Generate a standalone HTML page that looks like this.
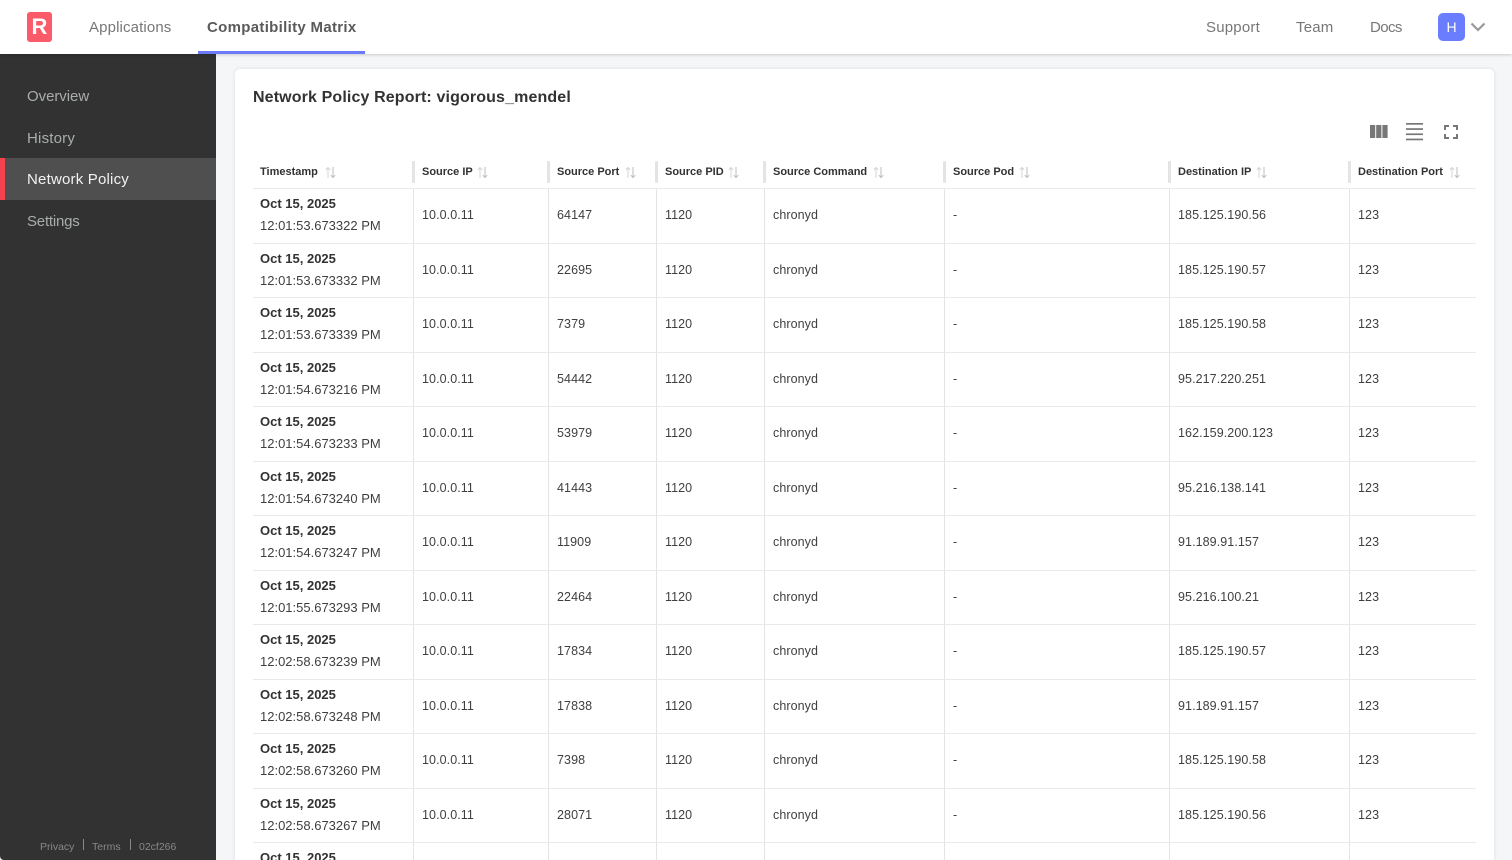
<!DOCTYPE html>
<html><head><meta charset="utf-8"><title>Network Policy Report</title>
<style>
*{box-sizing:border-box}
html,body{margin:0;padding:0;width:1512px;height:860px;overflow:hidden;background:#f5f6f8;font-family:"Liberation Sans",sans-serif}
#wrap{position:absolute;left:0;top:0;width:1512px;height:860px;overflow:hidden;background:#f5f6f8}
#top{position:absolute;left:0;top:0;width:1512px;height:54px;background:#fff;box-shadow:0 1px 3px rgba(0,0,0,.18);z-index:3}
#top span{position:absolute;top:18px;font-size:15px;line-height:20px;color:#777;letter-spacing:.2px;white-space:nowrap}
#logo{position:absolute;left:27px;top:12px;width:25px;height:30px;background:#fb5a68;border-radius:3px;color:#fff;font-weight:bold;font-size:22px;line-height:30px;text-align:center}
#ul{position:absolute;left:198px;top:51px;width:167px;height:3px;background:#6a7cfb}
#av{position:absolute;left:1438px;top:13px;width:27px;height:28px;border-radius:5px;background:#6a7dff;color:#fff;font-size:14px;line-height:28px;text-align:center}
#side{position:absolute;left:0;top:54px;width:216px;height:806px;background:#323232;border-bottom-left-radius:4px;z-index:2}
#side .i{position:absolute;left:27px;font-size:15px;line-height:20px;color:#a9adad;white-space:nowrap}
#act{position:absolute;left:0;top:104px;width:216px;height:42px;background:#4f4f4f;border-left:5px solid #f5424f}
#foot span{position:absolute;top:786px;font-size:10.5px;line-height:14px;color:#888}
#foot i{position:absolute;top:785px;width:1px;height:11px;background:#888}
#card{position:absolute;left:235px;top:69px;width:1259px;height:830px;background:#fff;border-radius:5px;box-shadow:0 0 4px rgba(0,0,0,.1)}
#title{position:absolute;left:253px;top:87px;font-size:16px;line-height:22px;font-weight:bold;color:#323232;white-space:nowrap;letter-spacing:.13px}
.h{position:absolute;top:166px;font-size:11px;line-height:13px;font-weight:bold;color:#323232;white-space:nowrap}
.hd{position:absolute;top:161px;width:3px;height:22px;background:#e4e4e4;border-radius:1px}
.s{position:absolute;top:166px;width:11px;height:13px}
#hb{position:absolute;left:253px;top:188px;width:1223px;height:1px;background:#e9e9e9}
#t{position:absolute;left:253px;top:189px;width:1223px;height:671px;overflow:hidden}
.r{display:grid;grid-template-columns:160px 135px 108px 108px 180px 225px 180px 127px;height:54.5px;border-bottom:1px solid #e9e9e9;font-size:12.5px;color:#3f3f3f;letter-spacing:.08px}
.r div{padding-left:8px;line-height:53.5px;border-left:1.5px solid #e4e4e4;white-space:nowrap}
.r div:first-child{border-left:0;padding-left:7px;font-size:13px;line-height:22px;padding-top:4.4px;letter-spacing:0}
.r b{display:block;color:#323232}
</style></head><body>
<div id="wrap">
<svg width="0" height="0" style="position:absolute"><defs><g id="so" fill="none" stroke-width="1"><path d="M3 12V1.500M.8 3.800 3 1.500 5.200 3.800" stroke="#d4d4d4"/><path d="M8 1v10.500M5.800 9.200 8 11.500 10.200 9.200" stroke="#bdbdbd"/></g></defs></svg>
<div id="top">
<div id="logo">R</div>
<span style="left:89px;letter-spacing:.13px">Applications</span>
<span style="left:207px;font-weight:bold;color:#5a5a5a;letter-spacing:.31px">Compatibility Matrix</span>
<div id="ul"></div>
<span style="left:1206px">Support</span><span style="left:1296px">Team</span><span style="left:1370px;letter-spacing:-.6px">Docs</span>
<div id="av">H</div>
<svg style="position:absolute;left:1470px;top:22px" width="16" height="10"><path d="M1.500 1.500 8 8l6.500-6.500" fill="none" stroke="#999" stroke-width="2.200"/></svg>
</div>
<div id="side">
<div id="act"></div>
<div class="i" style="top:33px;letter-spacing:-.05px">Overview</div>
<div class="i" style="top:75px;letter-spacing:.2px">History</div>
<div class="i" style="top:116px;color:#f2f2f2;letter-spacing:.2px">Network Policy</div>
<div class="i" style="top:158px;letter-spacing:-.2px">Settings</div>
<div id="foot"><span style="left:40px">Privacy</span><i style="left:83px"></i><span style="left:92px">Terms</span><i style="left:130px"></i><span style="left:139px">02cf266</span></div>
</div>
<div id="card"></div>
<div id="title">Network Policy Report: vigorous_mendel</div>
<svg style="position:absolute;left:1370px;top:125px" width="18" height="14" fill="#777"><rect width="5.200" height="13"/><rect x="6.200" width="5.200" height="13"/><rect x="12.400" width="5.200" height="13"/></svg>
<svg style="position:absolute;left:1406px;top:122px" width="18" height="20" fill="#777"><rect y="1" width="17" height="1.700"/><rect y="6.200" width="17" height="1.700"/><rect y="11.400" width="17" height="1.700"/><rect y="16.600" width="17" height="1.700"/></svg>
<svg style="position:absolute;left:1444px;top:125px" width="14" height="14" fill="none" stroke="#777" stroke-width="2"><path d="M1 5V1h4M9 1h4v4M13 9v4H9M5 13H1V9"/></svg>

<div class="h" style="left:260px">Timestamp</div><svg class="s" style="left:325px"><use href="#so"/></svg><div class="hd" style="left:412px"></div>
<div class="h" style="left:422px">Source IP</div><svg class="s" style="left:477px"><use href="#so"/></svg><div class="hd" style="left:547px"></div>
<div class="h" style="left:557px">Source Port</div><svg class="s" style="left:625px"><use href="#so"/></svg><div class="hd" style="left:655px"></div>
<div class="h" style="left:665px">Source PID</div><svg class="s" style="left:728px"><use href="#so"/></svg><div class="hd" style="left:763px"></div>
<div class="h" style="left:773px">Source Command</div><svg class="s" style="left:873px"><use href="#so"/></svg><div class="hd" style="left:943px"></div>
<div class="h" style="left:953px">Source Pod</div><svg class="s" style="left:1019px"><use href="#so"/></svg><div class="hd" style="left:1168px"></div>
<div class="h" style="left:1178px">Destination IP</div><svg class="s" style="left:1256px"><use href="#so"/></svg><div class="hd" style="left:1348px"></div>
<div class="h" style="left:1358px">Destination Port</div><svg class="s" style="left:1449px"><use href="#so"/></svg>
<div id="hb"></div>
<div id="t">
<div class="r"><div><b>Oct 15, 2025</b>12:01:53.673322 PM</div><div>10.0.0.11</div><div>64147</div><div>1120</div><div>chronyd</div><div>-</div><div>185.125.190.56</div><div>123</div></div>
<div class="r"><div><b>Oct 15, 2025</b>12:01:53.673332 PM</div><div>10.0.0.11</div><div>22695</div><div>1120</div><div>chronyd</div><div>-</div><div>185.125.190.57</div><div>123</div></div>
<div class="r"><div><b>Oct 15, 2025</b>12:01:53.673339 PM</div><div>10.0.0.11</div><div>7379</div><div>1120</div><div>chronyd</div><div>-</div><div>185.125.190.58</div><div>123</div></div>
<div class="r"><div><b>Oct 15, 2025</b>12:01:54.673216 PM</div><div>10.0.0.11</div><div>54442</div><div>1120</div><div>chronyd</div><div>-</div><div>95.217.220.251</div><div>123</div></div>
<div class="r"><div><b>Oct 15, 2025</b>12:01:54.673233 PM</div><div>10.0.0.11</div><div>53979</div><div>1120</div><div>chronyd</div><div>-</div><div>162.159.200.123</div><div>123</div></div>
<div class="r"><div><b>Oct 15, 2025</b>12:01:54.673240 PM</div><div>10.0.0.11</div><div>41443</div><div>1120</div><div>chronyd</div><div>-</div><div>95.216.138.141</div><div>123</div></div>
<div class="r"><div><b>Oct 15, 2025</b>12:01:54.673247 PM</div><div>10.0.0.11</div><div>11909</div><div>1120</div><div>chronyd</div><div>-</div><div>91.189.91.157</div><div>123</div></div>
<div class="r"><div><b>Oct 15, 2025</b>12:01:55.673293 PM</div><div>10.0.0.11</div><div>22464</div><div>1120</div><div>chronyd</div><div>-</div><div>95.216.100.21</div><div>123</div></div>
<div class="r"><div><b>Oct 15, 2025</b>12:02:58.673239 PM</div><div>10.0.0.11</div><div>17834</div><div>1120</div><div>chronyd</div><div>-</div><div>185.125.190.57</div><div>123</div></div>
<div class="r"><div><b>Oct 15, 2025</b>12:02:58.673248 PM</div><div>10.0.0.11</div><div>17838</div><div>1120</div><div>chronyd</div><div>-</div><div>91.189.91.157</div><div>123</div></div>
<div class="r"><div><b>Oct 15, 2025</b>12:02:58.673260 PM</div><div>10.0.0.11</div><div>7398</div><div>1120</div><div>chronyd</div><div>-</div><div>185.125.190.58</div><div>123</div></div>
<div class="r"><div><b>Oct 15, 2025</b>12:02:58.673267 PM</div><div>10.0.0.11</div><div>28071</div><div>1120</div><div>chronyd</div><div>-</div><div>185.125.190.56</div><div>123</div></div>
<div class="r"><div><b>Oct 15, 2025</b></div><div></div><div></div><div></div><div></div><div></div><div></div><div></div></div>
</div>
</div>
</body></html>
